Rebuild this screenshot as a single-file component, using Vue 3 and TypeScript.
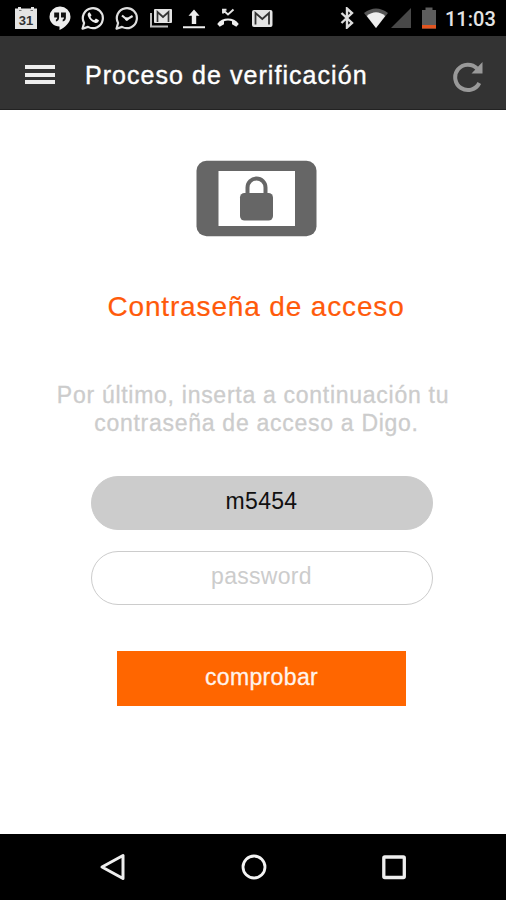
<script setup lang="ts">
import { ref } from 'vue'

const user = ref<string>('m5454')
const password = ref<string>('')
const lines: string[] = ['Por último, inserta a continuación tu', 'contraseña de acceso a Digo.']
</script>

<template>
  <div class="screen">
    <div class="status">
      <div class="notifications">
        <svg viewBox="0 0 24 24">
          <path d="M1 2.500h3V1h3v1.500h10V1h3v1.500h3V23H1z" fill="#e4e4e4" />
          <path d="M5 4.500h2.500M16.500 4.500h2.500" stroke="#777" stroke-width="1.200" />
          <text x="12" y="18.500" text-anchor="middle" class="day">31</text>
        </svg>
        <svg viewBox="0 0 24 24">
          <path d="M12 .5A10.300 10.300 0 0 0 1.500 10.800c0 5.700 4.500 9.700 10 9.700V24c5.500-2.500 11-7.400 11-13.200A10.300 10.300 0 0 0 12 .5z" fill="#eee" />
          <path d="M6.200 6.500h4.900v5c0 2-1.200 3.700-3.200 4v-2c1-.2 1.300-1 1.300-2h-3zM13 6.500h4.900v5c0 2-1.200 3.700-3.200 4v-2c1-.2 1.300-1 1.300-2h-3z" fill="#111" />
        </svg>
        <svg viewBox="0 0 24 24">
          <path d="M1.500 22.700 3.100 17A10 10 0 1 1 7 20.900z" fill="none" stroke="#e4e4e4" stroke-width="2.200" stroke-linejoin="round" />
          <path d="M8.600 6.200c-1.700.4-2.400 2.200-1.600 4.100 1.300 3.300 3.600 5.400 6.800 6.500 2.200.7 3.900-.6 4.200-2.500l-3.100-1.700-1.600 1.700c-2-.8-3-1.800-3.900-3.600l1.200-1.500z" fill="#eee" />
        </svg>
        <svg viewBox="0 0 24 24">
          <path d="M1.500 22.700 3.100 17A10 10 0 1 1 7 20.900z" fill="none" stroke="#ddd" stroke-width="2.200" stroke-linejoin="round" />
          <path d="m7 9.500 4.800 4 5.800-3.500" fill="none" stroke="#e4e4e4" stroke-width="2.200" />
          <circle cx="11.800" cy="13" r="1.800" fill="#eee" />
        </svg>
        <svg viewBox="0 0 24 24">
          <path d="M2 7v13.500h17" fill="none" stroke="#bbb" stroke-width="2" />
          <rect x="5" y="3" width="18" height="14" rx="1" fill="#e4e4e4" />
          <path d="M8.500 16V6l5.500 5 5.500-5v10" fill="none" stroke="#333" stroke-width="1.700" />
        </svg>
        <svg viewBox="0 0 24 24">
          <path d="M12 3.500 6.500 9.700h3.300V18h4.400V9.700h3.300zM1 20.200h22v2H1z" fill="#eee" />
        </svg>
        <svg viewBox="0 0 24 24">
          <path d="m7 4 5 4.500 5.500-5M7 7.500V3.800h3.500" fill="none" stroke="#e4e4e4" stroke-width="1.900" />
          <path d="M1.200 18c5-7.300 16.600-7.300 21.600 0l-2.500 2.800-4.300-2.600v-3c-2.600-.8-5.400-.8-8 0v3l-4.300 2.600z" fill="#eee" />
        </svg>
        <svg viewBox="0 0 24 24">
          <rect x="2" y="4" width="20.500" height="17" rx="2" fill="#e4e4e4" />
          <path d="M5.500 18.500V7l6.800 6L19 7v11.500" fill="none" stroke="#333" stroke-width="1.800" />
        </svg>
      </div>
      <div class="system">
        <svg class="bluetooth" viewBox="0 0 14 22">
          <path d="m1.500 6 10.500 10-5 4.500v-19L12 6 1.500 16" fill="none" stroke="#ddd" stroke-width="2.400" />
        </svg>
        <svg class="wifi" viewBox="0 0 26 22">
          <path d="M1 6Q13-3 25 6L13 21z" fill="#555" />
          <path d="M3.800 9Q13 1.500 22.200 9L13 21z" fill="#eee" />
        </svg>
        <svg class="signal" viewBox="0 0 20 20"><path d="M20 0v20H0z" fill="#484848" /></svg>
        <svg class="battery" viewBox="0 0 14 22">
          <path d="M0 3h3.500V.5h7V3H14v18.500H0z" fill="#5d5d5d" />
          <path d="M0 18h14v3.500H0z" fill="#e35520" />
        </svg>
        <span class="clock">11:03</span>
      </div>
    </div>

    <header class="appbar">
      <button class="menu" aria-label="Menú"><i /><i /><i /></button>
      <h1>Proceso de verificación</h1>
      <button class="reload" aria-label="Recargar">
        <svg viewBox="0 0 32 32">
          <path d="M27.300 22A12.700 12.700 0 1 1 25 7.500" fill="none" stroke="#999" stroke-width="4" />
          <path d="M30.500 1v11.500H19.500z" fill="#999" />
        </svg>
      </button>
    </header>

    <main>
      <svg class="device" viewBox="0 0 122 77">
        <rect x=".5" y=".8" width="120" height="75.500" rx="10" fill="#666" />
        <path d="M22.500 11h76.500v55h-76.500z" fill="#fff" />
        <path d="M51.500 35v-7.500a9 9 0 0 1 18 0v7.500" fill="none" stroke="#666" stroke-width="4" />
        <rect x="44" y="33" width="33" height="27.500" rx="4.500" fill="#666" />
      </svg>
      <h2>Contraseña de acceso</h2>
      <p><span v-for="line in lines" :key="line">{{ line }}</span></p>
      <form @submit.prevent>
        <input v-model="user" class="user" type="text" />
        <input v-model="password" type="password" placeholder="password" />
        <button class="submit" type="submit">comprobar</button>
      </form>
    </main>

    <nav>
      <svg viewBox="0 0 30 30"><path d="M25 3.500v23L4 15z" fill="none" stroke="#eee" stroke-width="3" stroke-linejoin="round" /></svg>
      <svg viewBox="0 0 30 30"><circle cx="15" cy="15" r="11" fill="none" stroke="#f4f4f4" stroke-width="2.800" /></svg>
      <svg viewBox="0 0 30 30"><rect x="4.800" y="5" width="20.500" height="20.500" rx="1" fill="none" stroke="#eee" stroke-width="3.300" /></svg>
    </nav>
  </div>
</template>

<style>
body {
  margin: 0;
  background: #fff;
}
</style>

<style scoped>
.screen {
  width: 506px;
  height: 900px;
  display: flex;
  flex-direction: column;
  overflow: hidden;
  background: #fff;
  font-family: "Liberation Sans", Arial, sans-serif;
}
svg {
  display: block;
  flex: none;
}
button {
  padding: 0;
  border: 0;
  background: none;
}
.status {
  height: 36px;
  box-sizing: border-box;
  padding: 0 11px 0 14px;
  display: flex;
  justify-content: space-between;
  align-items: center;
  background: #000;
}
.notifications {
  display: flex;
  gap: 9.7px;
}
.notifications svg {
  width: 24px;
  height: 24px;
}
.day {
  font: bold 13px "Liberation Sans", sans-serif;
  fill: #333;
}
.system {
  display: flex;
  align-items: center;
}
.bluetooth {
  width: 14px;
  height: 22px;
  margin-right: 9px;
}
.wifi {
  width: 26px;
  height: 22px;
  margin-right: 2px;
}
.signal {
  width: 20px;
  height: 20px;
  margin-right: 11px;
}
.battery {
  width: 14px;
  height: 22px;
  margin-right: 9px;
}
.clock {
  width: 50px;
  padding-top: 2px;
  font: 500 20px/24px Roboto, sans-serif;
  color: #e4e4e4;
  text-align: right;
  white-space: nowrap;
}
.appbar {
  height: 74px;
  box-sizing: border-box;
  padding: 0 22px 0 25px;
  display: flex;
  align-items: center;
  background: #333;
  border-bottom: 1px solid #222;
}
.menu {
  width: 30px;
  height: 19px;
  margin-top: 4px;
  display: flex;
  flex-direction: column;
  justify-content: space-between;
}
.menu i {
  height: 4px;
  background: #eee;
}
h1 {
  margin: 4px 0 0 30px;
  flex: 1;
  font-size: 25px;
  line-height: 30px;
  font-weight: 400;
  letter-spacing: 1.05px;
  color: #fff;
  -webkit-text-stroke: 0.4px #fff;
}
.reload {
  margin-top: 8px;
}
.reload svg {
  width: 32px;
  height: 32px;
}
main {
  flex: 1;
  display: flex;
  flex-direction: column;
  align-items: center;
}
.device {
  width: 122px;
  height: 77px;
  margin: 50px 0 0 7px;
}
h2 {
  margin: 54px 0 0 6px;
  font-size: 28px;
  line-height: 32px;
  font-weight: 400;
  letter-spacing: 0.85px;
  color: #ff5a0a;
  -webkit-text-stroke: 0.2px #ff5a0a;
}
p {
  margin: 58px 0 0;
  display: flex;
  flex-direction: column;
  align-items: center;
  font-size: 23px;
  line-height: 28px;
  letter-spacing: 0.72px;
  color: #ccc;
  -webkit-text-stroke: 0.3px #ccc;
}
p span:last-child {
  margin-left: 7px;
}
form {
  margin: 39px 0 0 17px;
  display: flex;
  flex-direction: column;
  align-items: center;
}
input {
  width: 342px;
  height: 54px;
  box-sizing: border-box;
  margin: 0 0 21px;
  padding: 0 0 3px;
  border: 1px solid #ccc;
  border-radius: 27px;
  outline: 0;
  background: #fff;
  font: 23px "Liberation Sans", Arial, sans-serif;
  letter-spacing: 0.3px;
  text-align: center;
  color: #111;
}
.user {
  background: #ccc;
}
input::placeholder {
  color: #ccc;
  opacity: 1;
}
.submit {
  width: 289px;
  height: 55px;
  margin-top: 25px;
  padding-bottom: 2px;
  background: #f60;
  font: 23px "Liberation Sans", Arial, sans-serif;
  letter-spacing: 0.35px;
  color: #fff3ec;
  -webkit-text-stroke: 0.3px #fff3ec;
}
nav {
  height: 66px;
  padding: 0 97px 0 98px;
  display: flex;
  justify-content: space-between;
  align-items: center;
  background: #000;
}
nav svg {
  width: 30px;
  height: 30px;
}
</style>
